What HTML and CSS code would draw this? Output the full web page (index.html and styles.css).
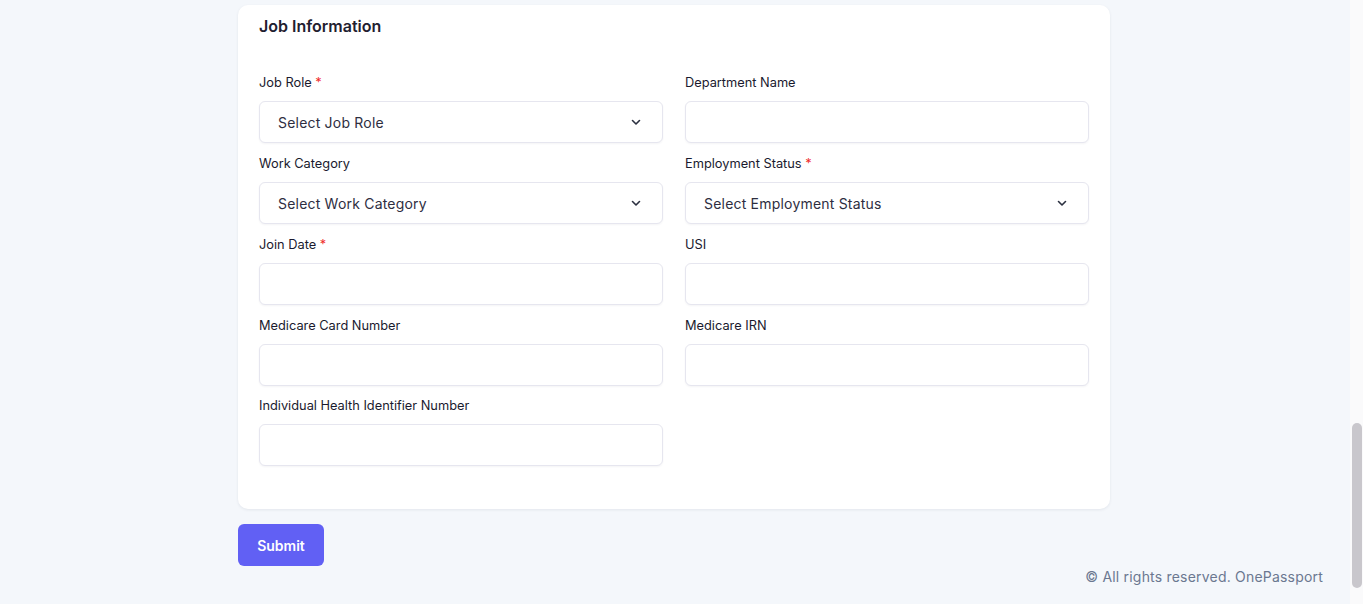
FILE: index.html
```html
<!DOCTYPE html>
<html lang="en">
<head>
<meta charset="utf-8">
<title>Job Information</title>
<link rel="stylesheet" href="styles.css">
</head>
<body>
<div class="page">
  <main class="main">
    <section class="card">
      <h2 class="card-title">Job Information</h2>
      <div class="grid">
        <div class="field">
          <label class="label">Job Role <span class="req">*</span></label>
          <div class="control select">
            <span>Select Job Role</span>
            <svg class="chev" width="12" height="12" viewBox="0 0 12 12"><path d="M2.5 4.5 6 8l3.5-3.5" fill="none" stroke="#2b3040" stroke-width="1.6" stroke-linecap="round" stroke-linejoin="round"/></svg>
          </div>
        </div>
        <div class="field">
          <label class="label">Department Name</label>
          <div class="control"></div>
        </div>
        <div class="field">
          <label class="label">Work Category</label>
          <div class="control select">
            <span>Select Work Category</span>
            <svg class="chev" width="12" height="12" viewBox="0 0 12 12"><path d="M2.5 4.5 6 8l3.5-3.5" fill="none" stroke="#2b3040" stroke-width="1.6" stroke-linecap="round" stroke-linejoin="round"/></svg>
          </div>
        </div>
        <div class="field">
          <label class="label">Employment Status <span class="req">*</span></label>
          <div class="control select">
            <span>Select Employment Status</span>
            <svg class="chev" width="12" height="12" viewBox="0 0 12 12"><path d="M2.5 4.5 6 8l3.5-3.5" fill="none" stroke="#2b3040" stroke-width="1.6" stroke-linecap="round" stroke-linejoin="round"/></svg>
          </div>
        </div>
        <div class="field">
          <label class="label">Join Date <span class="req">*</span></label>
          <div class="control"></div>
        </div>
        <div class="field">
          <label class="label">USI</label>
          <div class="control"></div>
        </div>
        <div class="field">
          <label class="label">Medicare Card Number</label>
          <div class="control"></div>
        </div>
        <div class="field">
          <label class="label">Medicare IRN</label>
          <div class="control"></div>
        </div>
        <div class="field">
          <label class="label">Individual Health Identifier Number</label>
          <div class="control"></div>
        </div>
      </div>
    </section>
    <button class="submit" type="button">Submit</button>
  </main>
  <footer class="footer">© All rights reserved. OnePassport</footer>
</div>
<div class="scrollbar"><div class="thumb"></div></div>
</body>
</html>
```
FILE: styles.css
```css
* { box-sizing: border-box; }

html, body {
  margin: 0;
  height: 604px;
  overflow: hidden;
}

body {
  background: #f4f7fb;
  font-family: Inter, "Noto Sans", sans-serif;
  color: #1b1b2b;
}

.page {
  padding-right: 15px;
}

.main {
  width: 872px;
  margin: 0 auto;
  padding-top: 5px;
}

.card {
  background: #ffffff;
  border-radius: 10px;
  box-shadow: 0 1px 3px rgba(30, 40, 70, 0.08);
  padding: 9px 21px 43px;
}

.card-title {
  margin: 0 0 36px;
  font-size: 16px;
  line-height: 24px;
  font-weight: 600;
  color: #1f2030;
}

.grid {
  display: grid;
  grid-template-columns: 1fr 1fr;
  column-gap: 22px;
  row-gap: 12px;
}

.field {
  display: flex;
  flex-direction: column;
}

/* last row sits a pixel tighter */
.field:nth-child(n+9) .label {
  padding-top: 0;
}

.label {
  font-size: 12.8px;
  line-height: 16px;
  padding-top: 1px;
  margin-bottom: 10px;
  color: #1a1a2e;
}

.req {
  color: #ef2b2b;
}

.control {
  height: 42px;
  border: 1px solid #e6e6ef;
  border-radius: 6px;
  background: #fff;
  box-shadow: 0 1px 2px rgba(30, 40, 70, 0.05);
}

.select {
  display: flex;
  align-items: center;
  justify-content: space-between;
  padding: 0 20px 0 18px;
  font-size: 14px;
  letter-spacing: 0.2px;
  color: #2e2e3f;
}

.chev {
  display: block;
}

.submit {
  margin-top: 15px;
  width: 86px;
  height: 42px;
  border: 0;
  border-radius: 6px;
  background: #6160f4;
  color: #fff;
  font-family: Inter, "Noto Sans", sans-serif;
  font-size: 14px;
  font-weight: 600;
  display: block;
}

.footer {
  text-align: right;
  padding-right: 25px;
  margin-top: 1px;
  font-size: 14px;
  line-height: 20px;
  letter-spacing: 0.2px;
  color: #6b7890;
}

.scrollbar {
  position: fixed;
  top: 0;
  right: 0;
  width: 13px;
  height: 604px;
  background: #fafafb;
}

.thumb {
  position: absolute;
  top: 423px;
  left: 2px;
  width: 10px;
  height: 165px;
  border-radius: 5px;
  background: #c9c7cc;
}
```
